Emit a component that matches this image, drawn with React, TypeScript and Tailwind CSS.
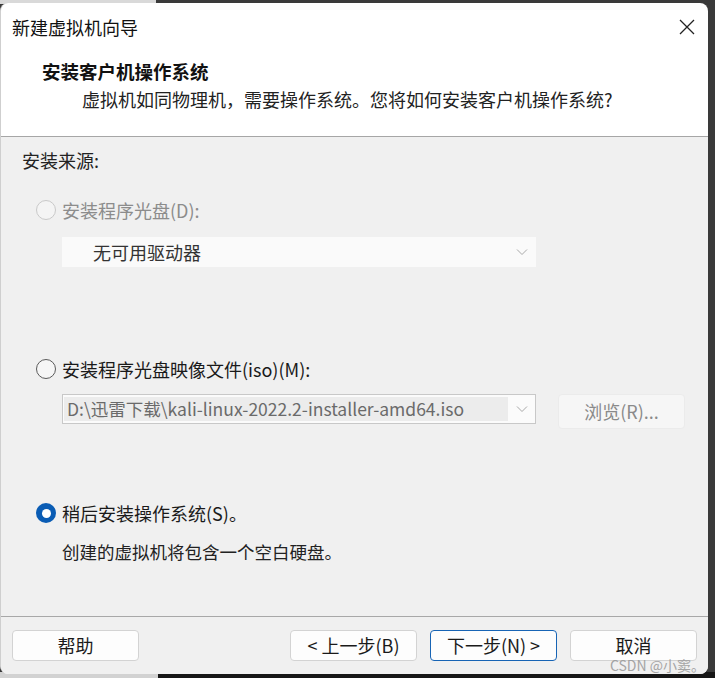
import React from 'react';

const font = "font-['Noto_Sans_CJK_SC','Noto_Sans',sans-serif]";

const Chevron: React.FC<{ className?: string }> = ({ className }) => (
  <svg width="12" height="8" viewBox="0 0 12 8" className={className}>
    <path d="M1 1.5 L6 6.5 L11 1.5" fill="none" stroke="#a8a8a8" strokeWidth="1" />
  </svg>
);

const Radio: React.FC<{ state: 'disabled' | 'off' | 'on' }> = ({ state }) => {
  if (state === 'on') {
    return (
      <div className="w-[20px] h-[20px] rounded-full bg-[#0a5cb4] flex items-center justify-center">
        <div className="w-[9px] h-[9px] rounded-full bg-white" />
      </div>
    );
  }
  return (
    <div
      className={
        state === 'disabled'
          ? 'w-[20px] h-[20px] rounded-full border border-[#c9c9c9] bg-[#f4f4f4]'
          : 'w-[20px] h-[20px] rounded-full border border-[#5a5a5a] bg-[#f6f6f6]'
      }
    />
  );
};

const Button: React.FC<{ children: React.ReactNode; primary?: boolean; className?: string }> = ({
  children,
  primary,
  className,
}) => (
  <div
    className={
      'w-[127px] h-[31px] rounded-[4px] flex items-center justify-center text-[18px] text-[#1a1a1a] bg-[#fdfdfd] ' +
      (primary ? 'border border-[#1764b5] ' : 'border border-[#d3d3d3] ') +
      (className ?? '')
    }
  >
    {children}
  </div>
);

export default function App() {
  return (
    <div className={`relative w-[715px] h-[678px] bg-[#3a3a3a] overflow-hidden ${font}`}>
      {/* backdrop pieces behind the dialog */}
      <div className="absolute left-0 top-0 w-[156px] h-[4px] bg-[#d9d9d9]" />
      <div className="absolute left-0 bottom-0 w-[158px] h-[6px] bg-[#d2d2d2]" />
      <div className="absolute left-[158px] bottom-0 right-0 h-[6px] bg-[#161616]" />

      <div className="relative mt-[3px] w-[708px] h-[671px] rounded-[8px] bg-white overflow-hidden flex flex-col border-l border-[#cfcfcf]">
        {/* title bar */}
        <div className="h-[46px] flex items-center justify-between pl-[11px] pr-[13px] pt-[2px]">
          <span className="text-[18px] text-[#111]">新建虚拟机向导</span>
          <svg width="16" height="16" viewBox="0 0 16 16">
            <path d="M1 1 L15 15 M15 1 L1 15" stroke="#222" strokeWidth="1.3" fill="none" />
          </svg>
        </div>

        {/* header */}
        <div className="h-[88px] border-b border-[#a6a6a6] pl-[41px]">
          <div className="mt-[10px] text-[18.5px] font-bold text-[#111] leading-[24px]">安装客户机操作系统</div>
          <div className="mt-[4px] ml-[40px] text-[18px] text-[#222] leading-[24px] whitespace-nowrap">
            虚拟机如同物理机，需要操作系统。您将如何安装客户机操作系统?
          </div>
        </div>

        {/* body */}
        <div className="flex-1 bg-[#f0f0f0] pl-[21px] flex flex-col">
          <div className="mt-[11px] h-[24px] leading-[24px] text-[18px] text-[#222]">安装来源:</div>

          <div className="mt-[26px] h-[24px] flex items-center ml-[14px] gap-[6px]">
            <Radio state="disabled" />
            <span className="text-[18px] text-[#8c8c8c]">安装程序光盘(D):</span>
          </div>

          <div className="mt-[15px] ml-[40px] w-[474px] h-[30px] bg-[#fafafa] flex items-center justify-between pl-[31px] pr-[8px]">
            <span className="text-[18px] text-[#333]">无可用驱动器</span>
            <Chevron />
          </div>

          <div className="mt-[90px] h-[24px] flex items-center ml-[14px] gap-[6px]">
            <Radio state="off" />
            <span className="text-[18px] text-[#1a1a1a]">安装程序光盘映像文件(iso)(M):</span>
          </div>

          <div className="mt-[13px] h-[30px] flex items-center">
            <div className="ml-[40px] w-[474px] h-[30px] border border-[#c8c8c8] bg-[#fbfbfb] flex items-center">
              <div className="h-[24px] ml-[1px] w-[444px] bg-[#ececec] flex items-center pl-[3px] text-[17.5px] text-[#6a6a6a] whitespace-nowrap overflow-hidden">
                D:\迅雷下载\kali-linux-2022.2-installer-amd64.iso
              </div>
              <div className="flex-1 flex items-center justify-center">
                <Chevron />
              </div>
            </div>
            <div className="ml-[22px] w-[127px] h-[35px] mt-[4px] rounded-[4px] bg-[#f6f6f6] border border-[#ebebeb] flex items-center justify-center text-[18px] text-[#8a8a8a]">
              浏览(R)...
            </div>
          </div>

          <div className="mt-[77px] h-[24px] flex items-center ml-[14px] gap-[6px]">
            <Radio state="on" />
            <span className="text-[18px] text-[#1a1a1a]">稍后安装操作系统(S)。</span>
          </div>

          <div className="mt-[15px] ml-[40px] h-[24px] leading-[24px] text-[17.5px] text-[#222]">
            创建的虚拟机将包含一个空白硬盘。
          </div>
        </div>

        {/* footer */}
        <div className="h-[58px] bg-[#f0f0f0] border-t border-[#a8a8a8] flex items-start pt-[13px] pl-[11px]">
          <Button>帮助</Button>
          <Button className="ml-[151px]">&lt; 上一步(B)</Button>
          <Button primary className="ml-[13px]">下一步(N) &gt;</Button>
          <Button className="ml-[13px]">取消</Button>
        </div>

        <div className="absolute right-[3px] bottom-[0px] text-[14px] text-[#9c9c9c] opacity-90 leading-[18px]">
          CSDN @小窦。
        </div>
      </div>
    </div>
  );
}
